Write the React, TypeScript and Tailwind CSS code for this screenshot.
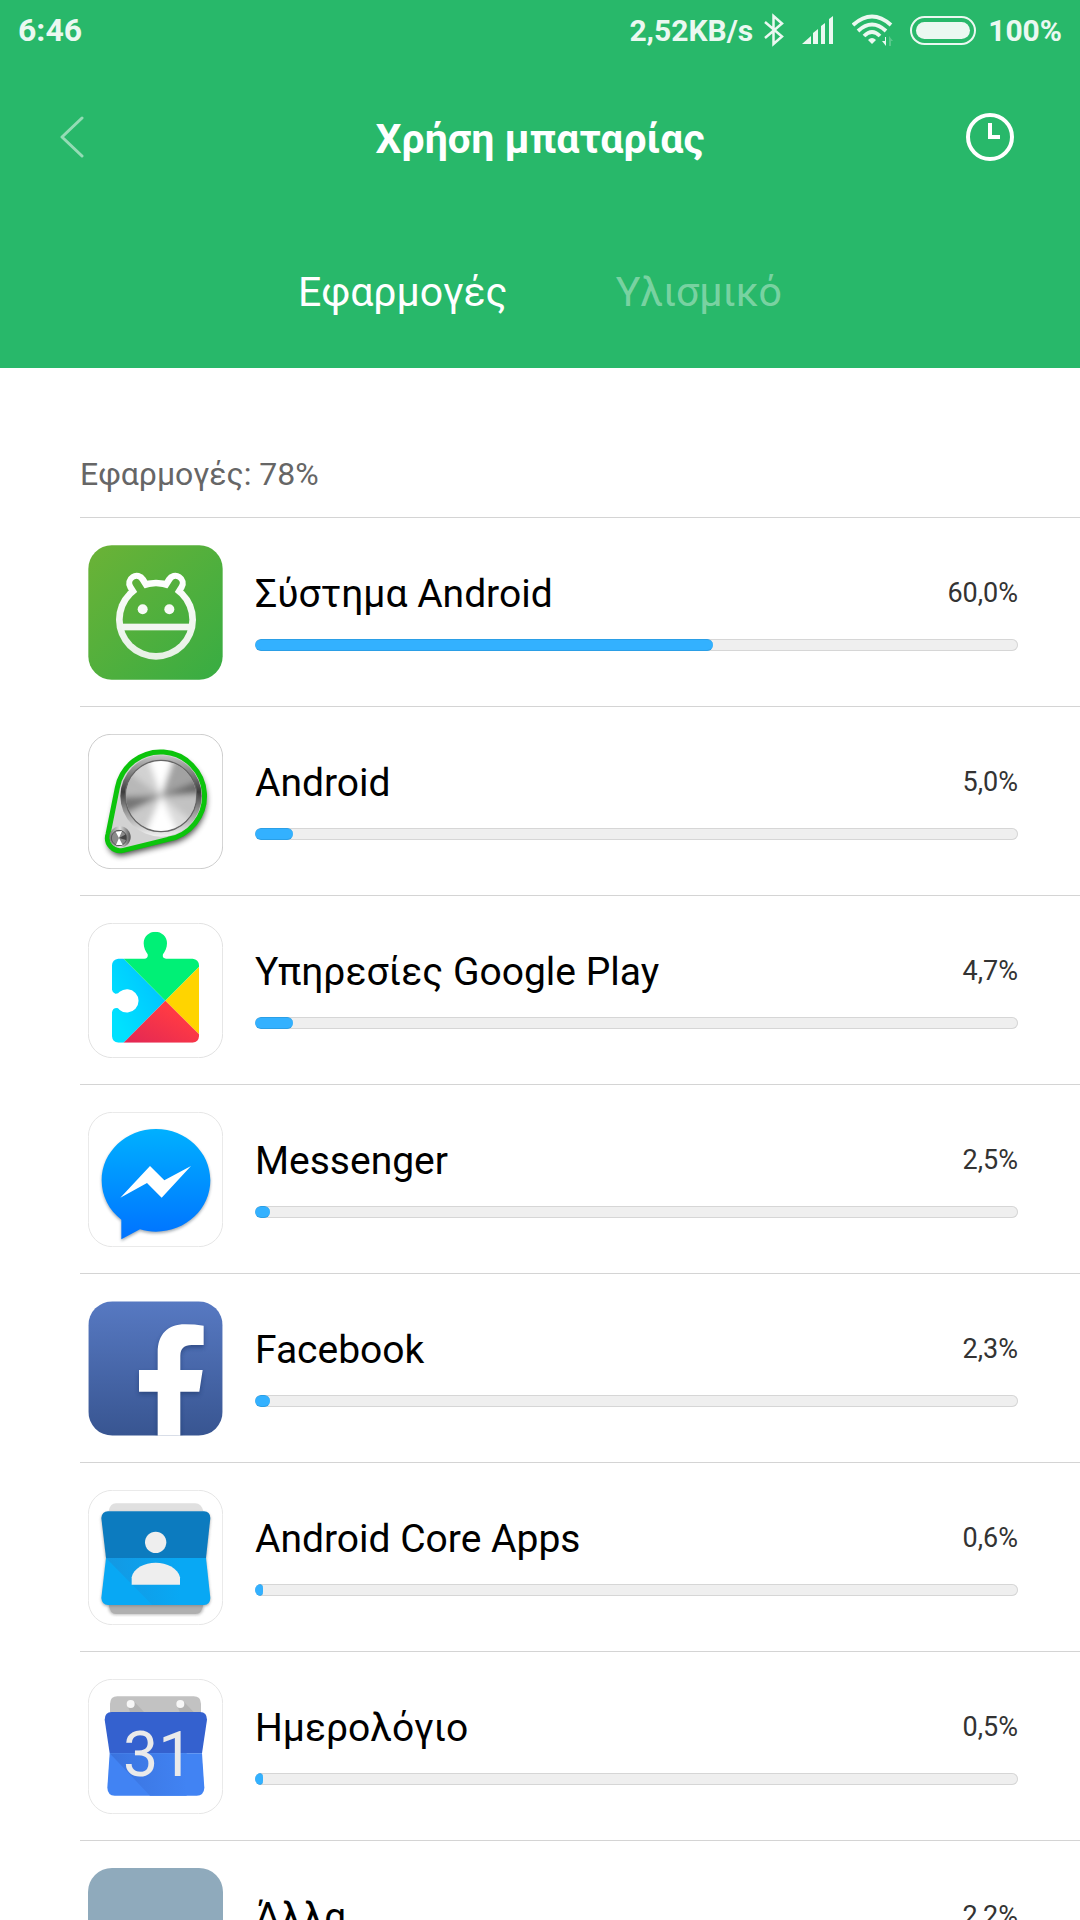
import React, { useState } from 'react';

interface AppUsage {
  id: string;
  name: string;
  percent: string;
  level: number;
  icon: () => React.ReactElement;
}

const iconClass = 'block w-[135px] h-[135px] shrink-0';

function SystemIcon() {
  return (
    <svg viewBox="24 24 405 405" className={iconClass} aria-hidden="true">
      <defs>
        <linearGradient id="sysBg" gradientUnits="userSpaceOnUse" x1="50" y1="50" x2="400" y2="400">
          <stop offset="0" stopColor="#68b237" />
          <stop offset="1" stopColor="#3bad42" />
        </linearGradient>
        <linearGradient id="sysFace" gradientUnits="userSpaceOnUse" x1="0" y1="110" x2="0" y2="370">
          <stop offset="0" stopColor="#ffffff" />
          <stop offset="1" stopColor="#e6f0e4" />
        </linearGradient>
      </defs>
      <rect x="25" y="25" width="403" height="403" rx="70" fill="url(#sysBg)" />
      <g strokeLinecap="round" fill="none">
        <path d="M170 139L186 165M286 139L270 165" stroke="url(#sysFace)" strokeWidth="63" />
        <circle cx="228" cy="248" r="120" fill="url(#sysFace)" />
        <circle cx="228" cy="248" r="100" fill="url(#sysBg)" />
        <path d="M169 138L188 168M287 138L268 168" stroke="url(#sysBg)" strokeWidth="24" />
      </g>
      <rect x="126" y="260" width="204" height="20" fill="#f2f6f1" />
      <circle cx="188" cy="217" r="15" fill="#f8faf7" />
      <circle cx="268" cy="217" r="15" fill="#f8faf7" />
    </svg>
  );
}

function AndroidIcon() {
  return (
    <svg viewBox="24 27 405 405" className={iconClass} aria-hidden="true">
      <defs>
        <linearGradient id="pulley" x1="0" y1="0" x2="1" y2="0">
          <stop offset="0" stopColor="#777" />
          <stop offset="0.5" stopColor="#ddd" />
          <stop offset="1" stopColor="#555" />
        </linearGradient>
        <linearGradient id="rim" x1="0" y1="0" x2="0" y2="1">
          <stop offset="0" stopColor="#c4c4c4" />
          <stop offset="0.45" stopColor="#3c3c3c" />
          <stop offset="0.65" stopColor="#8b8b8b" />
          <stop offset="1" stopColor="#f2f2f2" />
        </linearGradient>
        <filter id="soft" x="-20%" y="-20%" width="140%" height="140%">
          <feGaussianBlur stdDeviation="10" />
        </filter>
        <filter id="sheen" x="-20%" y="-20%" width="140%" height="140%">
          <feGaussianBlur stdDeviation="10" />
        </filter>
        <clipPath id="disc">
          <circle cx="243" cy="213" r="105" />
        </clipPath>
      </defs>
      <rect x="25" y="28" width="403" height="403" rx="68" fill="#fff" stroke="#b4b4b4" strokeWidth="2" />
      <path d="M110 188A134 134 0 1 1 264 345L130 378A40 40 0 0 1 82 328Z" transform="translate(3 12)" fill="#000" opacity="0.75" filter="url(#soft)" />
      <path d="M112 188A132 132 0 1 1 264 343L130 376A38 38 0 0 1 84 328Z" fill="#d2d2d2" stroke="#0cc40c" strokeWidth="15" />
      <circle cx="243" cy="213" r="122" fill="url(#rim)" />
      <circle cx="243" cy="213" r="107" fill="#b4b4b4" stroke="#666" strokeWidth="4" />
      <g clipPath="url(#disc)">
        <g filter="url(#sheen)">
          <path d="M243 213L200 90H285Z" fill="#fff" />
          <path d="M243 213L285 90L380 110V160Z" fill="#a2a2a2" />
          <path d="M243 213L370 160V205Z" fill="#6a6a6a" />
          <path d="M243 213L370 210L350 300Z" fill="#c2c2c2" />
          <path d="M243 213L350 300L300 335Z" fill="#dcdcdc" />
          <path d="M243 213L300 335H190Z" fill="#fff" />
          <path d="M243 213L190 335L110 290Z" fill="#cacaca" />
          <path d="M243 213L110 275V217Z" fill="#747474" />
          <path d="M243 213L110 210L130 130Z" fill="#b8b8b8" />
          <path d="M243 213L130 130L200 90Z" fill="#d2d2d2" />
        </g>
      </g>
      <circle cx="120" cy="336" r="32" fill="url(#pulley)" />
      <circle cx="117" cy="339" r="23" fill="#8a8a8a" stroke="#555" strokeWidth="3" />
      <path d="M117 339L107 320L126 318ZM117 339L108 360H128Z" fill="#fff" />
      <path d="M117 339L138 328V345Z" fill="#444" />
    </svg>
  );
}

function PlayServicesIcon() {
  return (
    <svg viewBox="24 22 405 405" className={iconClass} aria-hidden="true">
      <defs>
        <linearGradient id="playBlue" x1="1" y1="0" x2="0" y2="1">
          <stop offset="0.2" stopColor="#00c3ff" />
          <stop offset="0.8" stopColor="#00e1ff" />
        </linearGradient>
        <linearGradient id="playRed" x1="1" y1="0" x2="0" y2="1">
          <stop offset="0.3" stopColor="#ff3a44" />
          <stop offset="1" stopColor="#e02656" />
        </linearGradient>
        <clipPath id="puzzle">
          <path d="M115 129H193Q205 128 203 116C197 108 191 97 191 83A35 35 0 0 1 261 83C261 97 255 108 249 116Q246 128 258 129H338Q356 131 357 149V362Q356 379 338 381H115Q97 379 96 362V290Q98 276 112 277Q116 279 119 283A35 35 0 1 0 119 228Q114 235 106 234Q97 231 96 222V149Q97 131 115 129Z" />
        </clipPath>
      </defs>
      <rect x="25" y="23" width="403" height="403" rx="72" fill="#fff" stroke="#e2e2e2" strokeWidth="3" />
      <g clipPath="url(#puzzle)">
        <path d="M90 90L131 129L256 255L131 381L90 400Z" fill="url(#playBlue)" />
        <path d="M131 129V40H380V131L256 255Z" fill="#00f076" />
        <path d="M256 255L360 151V359Z" fill="#ffd400" />
        <path d="M256 255L357 356V385H127Z" fill="url(#playRed)" />
      </g>
    </svg>
  );
}

function MessengerIcon() {
  return (
    <svg viewBox="24 18 405 405" className={iconClass} aria-hidden="true">
      <defs>
        <linearGradient id="msg" x1="0" y1="0" x2="0" y2="1">
          <stop offset="0" stopColor="#00b0ff" />
          <stop offset="1" stopColor="#0072ff" />
        </linearGradient>
        <filter id="msgShadow">
          <feGaussianBlur stdDeviation="4" />
        </filter>
      </defs>
      <rect x="25" y="19" width="403" height="403" rx="72" fill="#fff" stroke="#e6e6e6" strokeWidth="3" />
      <path d="M228 69C318 69 391 138 391 223S318 377 228 377C211 377 195 375 180 370L124 400V341C87 313 65 270 65 223C65 138 138 69 228 69Z" transform="translate(0 5)" fill="#345" opacity="0.45" filter="url(#msgShadow)" />
      <path d="M228 69C318 69 391 138 391 223S318 377 228 377C211 377 195 375 180 370L124 400V341C87 313 65 270 65 223C65 138 138 69 228 69Z" fill="url(#msg)" />
      <path d="M121 275L210 180L253 223L333 180L245 275L201 231Z" fill="#fff" />
    </svg>
  );
}

function FacebookIcon() {
  return (
    <svg viewBox="24 33 405 405" className={iconClass} aria-hidden="true">
      <defs>
        <linearGradient id="fb" x1="0" y1="0" x2="0" y2="1">
          <stop offset="0" stopColor="#5779c2" />
          <stop offset="1" stopColor="#385591" />
        </linearGradient>
        <filter id="fbShadow">
          <feGaussianBlur stdDeviation="6" />
        </filter>
        <clipPath id="fbClip">
          <rect x="25" y="34" width="403" height="403" rx="72" />
        </clipPath>
      </defs>
      <g clipPath="url(#fbClip)">
        <rect x="25" y="34" width="403" height="403" fill="url(#fb)" />
        <path d="M233 440V305H177V240H233V188C233 132 264 103 315 103Q345 103 371 107V165H335Q301 165 301 197V240H368L358 305H301V440Z" transform="translate(0 8)" fill="#1f3466" opacity="0.55" filter="url(#fbShadow)" />
        <path d="M233 440V305H177V240H233V188C233 132 264 103 315 103Q345 103 371 107V165H335Q301 165 301 197V240H368L358 305H301V440Z" fill="#fff" />
      </g>
    </svg>
  );
}

function CoreAppsIcon() {
  return (
    <svg viewBox="24 28 405 405" className={iconClass} aria-hidden="true">
      <defs>
        <linearGradient id="coreFold" x1="0" y1="0" x2="1" y2="0">
          <stop offset="0" stopColor="#1498e2" />
          <stop offset="1" stopColor="#08a8f4" />
        </linearGradient>
        <filter id="coreShadow">
          <feGaussianBlur stdDeviation="4" />
        </filter>
      </defs>
      <rect x="25" y="29" width="403" height="403" rx="72" fill="#fff" stroke="#e6e6e6" strokeWidth="3" />
      <path d="M86 360H370V385Q366 402 350 402H106Q90 402 86 385Z" fill="#888" opacity="0.6" filter="url(#coreShadow)" />
      <path d="M86 92Q90 68 108 68H346Q364 68 370 92Z" fill="#e0e0e0" />
      <path d="M86 370H370Q366 400 346 400H108Q90 400 86 370Z" fill="#b0b0b0" />
      <path d="M64 112Q66 92 84 92H372Q390 92 391 112L378 234L391 352Q390 373 372 373H84Q66 373 64 352L78 234Z" fill="#777" opacity="0.6" transform="translate(0 4)" filter="url(#coreShadow)" />
      <path d="M78 232L64 112Q66 92 84 92H372Q390 92 391 112L378 232Z" fill="#0c7bbf" />
      <path d="M78 232H378L391 352Q390 373 372 373H84Q66 373 64 352Z" fill="#08a8f4" />
      <path d="M78 232H300V373H217Z" fill="url(#coreFold)" />
      <circle cx="227" cy="185" r="32" fill="#eee" />
      <path d="M155 312V290C160 262 194 246 227 246S294 262 300 290V312Z" fill="#eee" />
    </svg>
  );
}

function CalendarIcon() {
  return (
    <svg viewBox="24 26 405 405" className={iconClass} aria-hidden="true">
      <defs>
        <linearGradient id="calFold" x1="0" y1="0" x2="1" y2="0">
          <stop offset="0" stopColor="#3a73de" />
          <stop offset="1" stopColor="#4183f3" />
        </linearGradient>
      </defs>
      <rect x="25" y="27" width="403" height="403" rx="72" fill="#fff" stroke="#e6e6e6" strokeWidth="3" />
      <path d="M90 135V100Q91 78 112 78H341Q362 78 363 100V135Z" fill="#c2c2c2" />
      <path d="M161 93L192 125H150L143 108ZM310 93L341 125H299L292 108Z" fill="#b3b3b3" />
      <circle cx="152" cy="101" r="12" fill="#f7f7f7" />
      <circle cx="301" cy="101" r="12" fill="#f7f7f7" />
      <path d="M89 249L74 148Q74 126 95 125H360Q381 126 381 148L366 249Z" fill="#3461cf" />
      <path d="M89 249H366L373 352Q372 375 350 376H104Q83 375 82 352Z" fill="#4183f3" />
      <path d="M89 249H320V376H210Z" fill="url(#calFold)" />
      <text x="235" y="317" textAnchor="middle" fill="#eaeaea" className="font-[Roboto,sans-serif] text-[188px] font-normal">
        31
      </text>
    </svg>
  );
}

function OtherIcon() {
  return <div className="w-[135px] h-[135px] shrink-0 rounded-3xl bg-[#8faabc]" />;
}

const apps: AppUsage[] = [
  { id: 'system', name: 'Σύστημα Android', percent: '60,0%', level: 60, icon: SystemIcon },
  { id: 'android', name: 'Android', percent: '5,0%', level: 5, icon: AndroidIcon },
  { id: 'play', name: 'Υπηρεσίες Google Play', percent: '4,7%', level: 5, icon: PlayServicesIcon },
  { id: 'messenger', name: 'Messenger', percent: '2,5%', level: 2, icon: MessengerIcon },
  { id: 'facebook', name: 'Facebook', percent: '2,3%', level: 2, icon: FacebookIcon },
  { id: 'core', name: 'Android Core Apps', percent: '0,6%', level: 1, icon: CoreAppsIcon },
  { id: 'calendar', name: 'Ημερολόγιο', percent: '0,5%', level: 1, icon: CalendarIcon },
  { id: 'other', name: 'Άλλα', percent: '2,2%', level: 2, icon: OtherIcon }
];

function StatusBar() {
  return (
    <div className="flex h-[60px] items-center justify-between px-[18px] font-bold text-[#ebf8f1]">
      <span className="text-[32px]">6:46</span>
      <div className="flex items-center text-[30px]">
        <span>2,52KB/s</span>
        <svg viewBox="0 0 20 34" className="ml-[11px] h-[34px] w-5" fill="none" stroke="currentColor" strokeWidth="2.5" aria-hidden="true">
          <path d="M1 9L18 23.5L9.5 31V3L18 10.5L1 25" />
        </svg>
        <svg viewBox="0 0 32 28" className="ml-[18px] h-7 w-8" fill="currentColor" aria-hidden="true">
          <path d="M0 28L9 20V28ZM11 17L16 13V28H11ZM19 10L23 7V28H19ZM27 3L31 0V28H27Z" />
        </svg>
        <svg viewBox="0 0 42 32" className="ml-[18px] h-8 w-[42px]" aria-hidden="true">
          <g fill="none" stroke="currentColor" strokeWidth="3.8">
            <path d="M1 11Q20 -6 39 11" />
            <path d="M6 17Q20 4 34 17" />
            <path d="M12 22Q20 14 28 22" />
          </g>
          <path d="M16 26Q20 22 24 26L20 30Z" fill="currentColor" />
          <path d="M34 23V32L30 27H33V23Z" fill="currentColor" />
          <path d="M37 32V22L41 27H39V32Z" fill="currentColor" opacity="0.25" />
        </svg>
        <div className="ml-4 h-[29px] w-[66px] rounded-full border-2 border-current p-1">
          <div className="h-full rounded-full bg-current" />
        </div>
        <span className="ml-3">100%</span>
      </div>
    </div>
  );
}

function UsageRow({ app }: { app: AppUsage }) {
  const Icon = app.icon;
  return (
    <li className="flex h-[189px] shrink-0 items-start gap-8 border-t border-[#d4d4d4] pl-2 pr-[62px] pt-[27px]">
      <Icon />
      <div className="min-w-0 flex-1 pt-[22px]">
        <div className="flex h-[54px] items-center justify-between">
          <span className="text-[39px] text-black">{app.name}</span>
          <span className="pb-0.5 text-[27px] text-[#333333]">{app.percent}</span>
        </div>
        <div
          role="progressbar"
          aria-label={app.name}
          aria-valuenow={app.level}
          className="mt-[18px] h-3 overflow-hidden rounded-full bg-[#efefef] ring-1 ring-inset ring-[#d6d6d6]"
        >
          <div
            className="h-full rounded-full border-y border-[#2b9fe6] bg-[#33b1ff]"
            style={{ width: `${app.level}%` }}
          />
        </div>
      </div>
    </li>
  );
}

export default function App() {
  const [activeTab, setActiveTab] = useState<'apps' | 'hardware'>('apps');

  const tabs = [
    { id: 'apps', label: 'Εφαρμογές' },
    { id: 'hardware', label: 'Υλισμικό' }
  ];

  return (
    <div className="flex h-screen flex-col overflow-hidden bg-white font-[Roboto,'Noto_Sans',sans-serif]">
      <header className="shrink-0 bg-[#28b86a] text-white">
        <StatusBar />
        <div className="grid h-[154px] grid-cols-[1fr_auto_1fr] items-center">
          <button type="button" aria-label="Πίσω" className="justify-self-start pl-[60px]">
            <svg viewBox="0 0 24 42" className="block h-[42px] w-6" fill="none" stroke="#fff" strokeOpacity="0.5" strokeWidth="3" strokeLinecap="round" strokeLinejoin="round">
              <path d="M22 2L2 21L22 40" />
            </svg>
          </button>
          <h1 className="pt-1.5 text-[41px] font-bold">Χρήση μπαταρίας</h1>
          <button type="button" aria-label="Ιστορικό" className="justify-self-end pr-[66px]">
            <svg viewBox="0 0 48 48" className="block h-12 w-12" fill="none" stroke="#fff" strokeWidth="4">
              <circle cx="24" cy="24" r="22" />
              <path d="M24 10V24H34" />
            </svg>
          </button>
        </div>
        <nav className="flex h-[154px] items-center justify-center gap-[108px]">
          {tabs.map((tab) => (
            <button
              key={tab.id}
              type="button"
              onClick={() => setActiveTab(tab.id as typeof activeTab)}
              className={`pt-1 text-[41px] ${activeTab === tab.id ? 'text-white' : 'text-white/40'}`}
            >
              {tab.label}
            </button>
          ))}
        </nav>
      </header>

      <main className="pl-20">
        <h2 className="flex h-[149px] items-end pb-[19px] text-[32px] text-[#666666]">Εφαρμογές: 78%</h2>
        <ul>
          {apps.map((app) => (
            <UsageRow key={app.id} app={app} />
          ))}
        </ul>
      </main>
    </div>
  );
}
